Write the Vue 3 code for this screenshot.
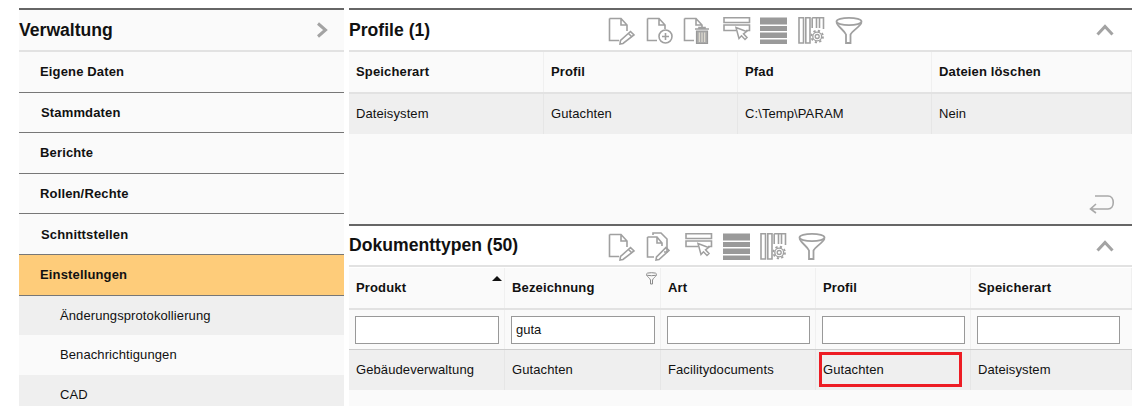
<template>
  <div class="page">
    <aside class="nav">
      <div class="nav-head">
        <span class="nav-title">Verwaltung</span>
        <svg class="nav-arrow" width="12" height="16" viewBox="0 0 12 16">
          <path d="M2 1.5L9.5 8L2 14.5" fill="none" stroke="#a3a3a3" stroke-width="3" />
        </svg>
      </div>
      <div
        v-for="item in navItems"
        :key="item.label"
        class="nav-item"
        :class="{ active: item.active, nudge: item.nudge }"
      >
        {{ item.label }}
      </div>
      <div
        v-for="(sub, i) in subItems"
        :key="sub"
        class="nav-sub"
        :class="{ odd: i % 2 === 1 }"
      >
        {{ sub }}
      </div>
    </aside>

    <main class="content">
      <section class="panel profiles">
        <header class="panel-head">
          <h2>Profile (1)</h2>
          <div class="tools">
            <svg v-for="t in toolsTop" :key="t" class="tool" viewBox="0 0 28 28" v-html="icons[t]"></svg>
          </div>
          <svg class="collapse" width="18" height="12" viewBox="0 0 18 12">
            <path d="M1.5 10.5L9 2.5L16.5 10.5" fill="none" stroke="#a3a3a3" stroke-width="3" />
          </svg>
        </header>
        <div class="grid grid-4 head">
          <div v-for="c in profileCols" :key="c" class="cell">{{ c }}</div>
        </div>
        <div class="grid grid-4 row">
          <div v-for="c in profileRow" :key="c" class="cell">{{ c }}</div>
        </div>
        <div class="panel-foot">
          <svg width="26" height="20" viewBox="0 0 26 20">
            <path d="M6 2H19C26 2 26 15 19 15H2M7 10L1.5 15L7 19" fill="none" stroke="#a9a9a9" stroke-width="1.6" />
          </svg>
        </div>
      </section>

      <section class="panel doctypes">
        <header class="panel-head">
          <h2>Dokumenttypen (50)</h2>
          <div class="tools">
            <svg v-for="t in toolsBottom" :key="t" class="tool" viewBox="0 0 28 28" v-html="icons[t]"></svg>
          </div>
          <svg class="collapse" width="18" height="12" viewBox="0 0 18 12">
            <path d="M1.5 10.5L9 2.5L16.5 10.5" fill="none" stroke="#a3a3a3" stroke-width="3" />
          </svg>
        </header>
        <div class="grid grid-5 head">
          <div v-for="(c, i) in docCols" :key="c" class="cell">
            {{ c }}
            <span v-if="i === 0" class="sorted"></span>
            <svg v-if="i === 1" class="col-filter" width="13" height="13" viewBox="0 0 13 13">
              <ellipse cx="6.5" cy="2.2" rx="5.2" ry="1.5" fill="none" stroke="#8a8a8a" />
              <path d="M1.5 3C2.5 5 4.8 6 5.5 8V12H7.5V8C8.2 6 10.5 5 11.5 3" fill="none" stroke="#8a8a8a" />
            </svg>
          </div>
        </div>
        <div class="grid grid-5 filters">
          <div v-for="c in docCols" :key="c" class="cell">
            <input type="text" :value="c === 'Bezeichnung' ? 'guta' : ''" />
          </div>
        </div>
        <div class="grid grid-5 row">
          <div v-for="(c, i) in docRow" :key="i" class="cell">
            {{ c }}
            <span v-if="i === 3" class="mark"></span>
          </div>
        </div>
      </section>
    </main>
  </div>
</template>

<script setup>
const navItems = [
  { label: 'Eigene Daten' },
  { label: 'Stammdaten', nudge: true },
  { label: 'Berichte' },
  { label: 'Rollen/Rechte' },
  { label: 'Schnittstellen', nudge: true },
  { label: 'Einstellungen', active: true }
]
const subItems = ['Änderungsprotokollierung', 'Benachrichtigungen', 'CAD']

const profileCols = ['Speicherart', 'Profil', 'Pfad', 'Dateien löschen']
const profileRow = ['Dateisystem', 'Gutachten', 'C:\\Temp\\PARAM', 'Nein']
const docCols = ['Produkt', 'Bezeichnung', 'Art', 'Profil', 'Speicherart']
const docRow = ['Gebäudeverwaltung', 'Gutachten', 'Facilitydocuments', 'Gutachten', 'Dateisystem']

const toolsTop = ['edit', 'add', 'trash', 'select', 'rows', 'cols', 'funnel']
const toolsBottom = ['edit', 'copy', 'select', 'rows', 'cols', 'funnel']

const line = 'fill="none" stroke="#a0a0a0" stroke-width="1.6"'
const sheet = (end) => `<path d="M1.5 2.5H13L19 9V${end}M13 2.5V9H19M1.5 2.5V24.5H11" ${line}/>`

// toolbar icons, all drawn on a 28x28 box
const icons = {
  edit: `${sheet(15)}<path d="M22.5 15.5L26 19L15 27.5L12 28L12.5 24.5Z" ${line}/><path d="M20.5 17.5L24 21" ${line}/>`,
  add: `${sheet(13)}<circle cx="19.5" cy="20.5" r="6.5" ${line}/><path d="M19.5 17V24M16 20.5H23" ${line}/>`,
  trash: `${sheet(11)}<path d="M12 13H26M16 13V11.5H22V13" ${line}/><path d="M13.5 15H24.5V27.5H13.5Z" fill="#aaa" stroke="#999" stroke-width="1.2"/><path d="M16.3 16.5V26M19 16.5V26M21.7 16.5V26" stroke="#e8e4d8" stroke-width="1"/>`,
  copy: `<path d="M7 3V1H15L21 7V20H18" ${line}/><path d="M1.5 5H11L16 11V14M11 5V11H16M1.5 5V25H8" ${line}/><path d="M20 15.5L23 18.5L13 27.5L10 28L10.5 25Z" ${line}/>`,
  select: `<path d="M3 1.8H28.5V6.5H3ZM15 14.5H3V9H28.5V14.5H25" ${line}/><path d="M15 11.5L18 22.5L20.5 19.8L24 23.5L26 21.5L22.5 17.8L25.5 15.5Z" fill="#fff" stroke="#a0a0a0" stroke-width="1.5"/>`,
  rows: `<path d="M2 1.5H29V8.5H2ZM2 10H29V15H2ZM2 16.5H29V22H2ZM2 23.5H29V28H2Z" fill="#9a9a9a"/>`,
  cols: `<path d="M3 1.8H7.5V27H3ZM9.8 1.8H14V27H9.8ZM16.2 1.8V12M20.5 1.8V12M16.2 1.8H27.5V13M23.5 1.8V12" ${line}/><circle cx="21.2" cy="20.5" r="2" fill="none" stroke="#a0a0a0" stroke-width="1.3"/><circle cx="21.2" cy="20.5" r="4.4" fill="none" stroke="#a0a0a0" stroke-width="1.3"/><circle cx="21.2" cy="20.5" r="5.8" fill="none" stroke="#a0a0a0" stroke-width="1.8" stroke-dasharray="2.2 2.35"/>`,
  funnel: `<ellipse cx="16" cy="5.5" rx="12.5" ry="3.6" fill="none" stroke="#a0a0a0" stroke-width="1.8"/><path d="M3.5 6.5C5 11 11 14 13 18.5V27H17.5V18.5C20 14 27 11 28.5 6.5" fill="none" stroke="#a0a0a0" stroke-width="1.8"/>`
}
</script>

<style>
html,
body {
  margin: 0;
  height: 406px;
  overflow: hidden;
  background: #fff;
}
</style>

<style scoped>
.page {
  display: flex;
  gap: 5px;
  height: 406px;
  padding: 8px 0 0 19px;
  box-sizing: border-box;
  overflow: hidden;
  font-family: "Liberation Sans", Arial, sans-serif;
  font-size: 13px;
  color: #111;
}

/* left navigation */
.nav {
  width: 325px;
  flex: none;
  background: #fafafa;
  border-top: 2px solid #666;
}

.nav-head {
  display: flex;
  align-items: center;
  justify-content: space-between;
  height: 40px;
  padding-right: 16px;
  border-bottom: 2px solid #e2e2e2;
}

.nav-title {
  font-size: 17.6px;
  font-weight: bold;
}

.nav-item {
  display: flex;
  align-items: center;
  height: 39.6px;
  padding-left: 21px;
  border-bottom: 1px solid #777;
  font-weight: bold;
  letter-spacing: 0.15px;
}

.nav-item.nudge {
  padding-left: 22px;
}

.nav-item.active {
  background: #fecc7a;
}

.nav-sub {
  display: flex;
  align-items: center;
  height: 39.6px;
  padding-left: 41px;
  background: #efefef;
  letter-spacing: 0.1px;
}

.nav-sub.odd {
  background: #fafafa;
}

/* right panels */
.content {
  flex: 1;
  min-width: 0;
  display: flex;
  flex-direction: column;
}

.panel {
  border-top: 2px solid #666;
  background: #fafafa;
  display: flex;
  flex-direction: column;
}

.profiles {
  height: 214px;
}

.doctypes {
  flex: 1;
}

.panel-head {
  display: flex;
  align-items: center;
  height: 40px;
  background: #fff;
  border-bottom: 2px solid #e2e2e2;
  flex: none;
}

.doctypes .panel-head {
  height: 39px;
}

.panel-head h2 {
  width: 259px;
  margin: 0;
  font-size: 17.6px;
  font-weight: bold;
  flex: none;
}

.tools {
  display: flex;
  gap: 9.5px;
}

.tool {
  width: 28px;
  height: 28px;
  overflow: visible;
}

.collapse {
  margin-left: auto;
  margin-right: 18px;
}

.grid {
  display: grid;
}

.grid-4 {
  grid-template-columns: 195px 194px 194px 1fr;
}

.grid-5 {
  grid-template-columns: 156px 156px 155px 155px 1fr;
}

.cell {
  position: relative;
  display: flex;
  align-items: center;
  padding-left: 7px;
  border-right: 1px solid #f0f0f0;
  box-sizing: border-box;
}

.head .cell {
  height: 40px;
  padding-bottom: 2px;
  font-weight: bold;
  letter-spacing: 0.15px;
}

.head {
  border-bottom: 2px solid #e2e2e2;
}

.doctypes .head {
  border-top: 1px solid #fff;
}

.row {
  background: #efefef;
}

.row .cell {
  height: 40px;
  padding-bottom: 2px;
  letter-spacing: 0.1px;
  border-right-color: #e6e6e6;
}

.filters {
  border-bottom: 1px solid #ccc;
}

.filters .cell {
  height: 39px;
  padding: 0 5px 0 6px;
}

.filters .cell:last-child {
  padding-right: 12px;
  border-right: none;
}

.filters input {
  width: 100%;
  height: 28px;
  box-sizing: border-box;
  padding: 0 4px;
  border: 1px solid #999;
  border-radius: 0;
  outline: none;
  background: #fff;
  font: 13px "Liberation Sans", Arial, sans-serif;
  color: #111;
}

.sorted {
  position: absolute;
  top: 8px;
  right: 2px;
  border-left: 5px solid transparent;
  border-right: 5px solid transparent;
  border-bottom: 5px solid #111;
}

.col-filter {
  position: absolute;
  top: 4px;
  right: 2px;
}

.mark {
  position: absolute;
  top: 2px;
  left: 3px;
  width: 143px;
  height: 35px;
  box-sizing: border-box;
  border: 3px solid #ed1c24;
}

.panel-foot {
  flex: 1;
  display: flex;
  align-items: flex-end;
  justify-content: flex-end;
  padding: 0 17px 10px 0;
}
</style>
